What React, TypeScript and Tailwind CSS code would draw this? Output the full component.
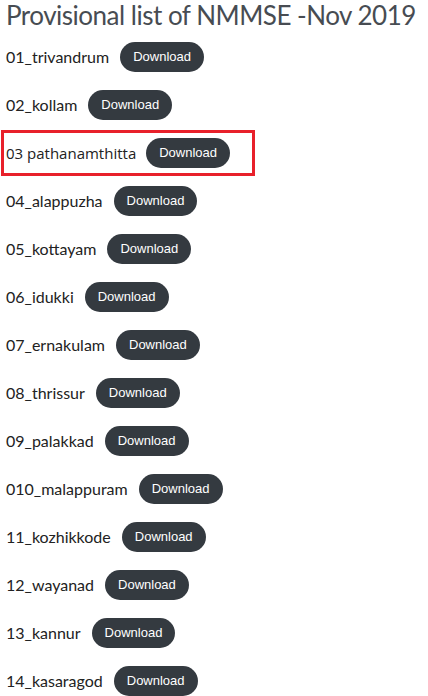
import React from "react";

const rows = [
  "01_trivandrum",
  "02_kollam",
  "03 pathanamthitta",
  "04_alappuzha",
  "05_kottayam",
  "06_idukki",
  "07_ernakulam",
  "08_thrissur",
  "09_palakkad",
  "010_malappuram",
  "11_kozhikkode",
  "12_wayanad",
  "13_kannur",
  "14_kasaragod",
];

function Btn() {
  return (
    <span className="inline-flex h-[30px] items-center rounded-full bg-[#343a40] px-[13px] text-[13px] text-white [font-family:'Liberation_Sans',Arial,sans-serif]">
      Download
    </span>
  );
}

export default function App() {
  return (
    <div className="h-[696px] w-[428px] overflow-hidden bg-white pl-[6px] [font-family:Lato,sans-serif]">
      <h1 className="h-[33px] whitespace-nowrap text-[26px] leading-[31px] tracking-[-0.5px] text-[#474c52]">
        Provisional list of NMMSE -Nov 2019
      </h1>
      <div className="flex flex-col">
        {rows.map((r, i) =>
          i === 2 ? (
            <div key={r} className="ml-[-5px] flex h-[48px] items-center">
              <div className="flex h-[46px] w-[254px] items-center gap-[10px] border-[3px] border-[#e8202a] pl-[2px]">
                <span className="text-[15px] text-[#222] [font-family:'Open_Sans',sans-serif]">{r}</span>
                <Btn />
              </div>
            </div>
          ) : (
            <div key={r} className="flex h-[48px] items-center gap-[11px]">
              <span className="text-[16px] text-[#222]">{r}</span>
              <Btn />
            </div>
          )
        )}
      </div>
    </div>
  );
}
